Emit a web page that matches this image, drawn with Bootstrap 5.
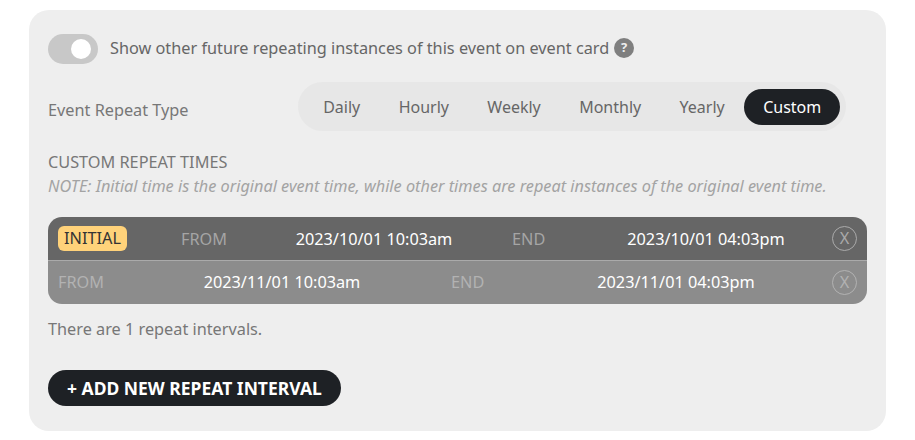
<!DOCTYPE html>
<html lang="en">
<head>
<meta charset="utf-8">
<title>Event Repeat</title>
<link rel="stylesheet" href="https://cdn.jsdelivr.net/npm/bootstrap@5.3.0/dist/css/bootstrap.min.css">
<style>
body{background:#fff;font-family:"Noto Sans",sans-serif;font-size:16.28px;color:#666;margin:0;}
.shell{margin:10px 29px 9px 29px;width:857px;height:421px;background:#eee;border-radius:20px;padding:24px 19px 0;}
.toggle-track{width:50px;height:30px;border-radius:15px;background:#c8c8c8;position:relative;flex:none;}
.toggle-knob{position:absolute;width:20px;height:20px;border-radius:50%;background:#fff;left:23px;top:5px;}
.toggle-label{color:#666;margin-left:12px;line-height:28px;padding-bottom:2px;}
.help-dot{width:20px;height:20px;border-radius:50%;background:#7f7f7f;color:#eee;font-size:13px;font-weight:700;display:flex;align-items:center;justify-content:center;margin-left:5px;margin-bottom:2px;}
.type-row{margin-top:18px;height:49px;}
.type-label{color:#777;padding-top:16px;line-height:24px;}
.pill-group{width:548px;height:49px;background:#e7e7e7;border-radius:25px;padding:7px 6px;margin-left:auto;margin-right:21px;}
.pill-item{height:36px;line-height:36px;border-radius:18px;color:#666;text-align:center;padding:0 19.2px;font-size:16px;}
.pill-on{background:#1e2125;color:#fff;}
.sec-title{color:#777;margin-top:19px;line-height:24px;}
.sec-note{color:#a3a3a3;font-style:italic;line-height:24px;margin-top:0;}
.time-table{margin-top:19px;border-radius:14px;overflow:hidden;width:819px;}
.time-row{display:grid;height:43px;padding:0 10px;align-items:center;}
.r-a{background:#666;grid-template-columns:123px 55px 276px 68px 252px 25px;}
.r-a .t-label,.r-a .t-value{padding-top:1px;}
.r-b{background:#8c8c8c;grid-template-columns:55px 338px 69px 312px 25px;border-top:1px solid #aaa;height:44px;}
.t-label{color:#a5a5a5;}
.r-b .t-label{color:#b2b2b2;}
.t-value{color:#fff;text-align:center;}
.tag-init{background:#ffd27a;color:#333;border-radius:6px;width:69px;height:25px;line-height:25px;text-align:center;}
.x-ring{width:25px;height:25px;border:1px solid #aaa;border-radius:50%;color:#aaa;font-size:16.28px;display:flex;align-items:center;justify-content:center;}
.r-b .x-ring{border-color:#b2b2b2;color:#b2b2b2;}
.count-note{color:#777;margin-top:13px;line-height:24px;}
.add-btn{margin-top:29px;background:#1e2125;color:#fff;font-weight:700;border-radius:18px;height:36px;line-height:36px;padding:0 19px;display:inline-block;border:0;font-size:17.5px;}
</style>
</head>
<body>
<div class="shell">
  <div class="d-flex align-items-center">
    <div class="toggle-track"><div class="toggle-knob"></div></div>
    <span class="toggle-label">Show other future repeating instances of this event on event card</span>
    <span class="help-dot">?</span>
  </div>
  <div class="d-flex type-row">
    <div class="type-label">Event Repeat Type</div>
    <div class="pill-group d-flex">
      <span class="pill-item">Daily</span>
      <span class="pill-item">Hourly</span>
      <span class="pill-item">Weekly</span>
      <span class="pill-item">Monthly</span>
      <span class="pill-item">Yearly</span>
      <span class="pill-item pill-on">Custom</span>
    </div>
  </div>
  <div class="sec-title">CUSTOM REPEAT TIMES</div>
  <div class="sec-note">NOTE: Initial time is the original event time, while other times are repeat instances of the original event time.</div>
  <div class="time-table">
    <div class="time-row r-a">
      <div><div class="tag-init">INITIAL</div></div>
      <div class="t-label">FROM</div>
      <div class="t-value">2023/10/01 10:03am</div>
      <div class="t-label">END</div>
      <div class="t-value">2023/10/01 04:03pm</div>
      <div class="x-ring">X</div>
    </div>
    <div class="time-row r-b">
      <div class="t-label">FROM</div>
      <div class="t-value">2023/11/01 10:03am</div>
      <div class="t-label">END</div>
      <div class="t-value">2023/11/01 04:03pm</div>
      <div class="x-ring">X</div>
    </div>
  </div>
  <div class="count-note">There are 1 repeat intervals.</div>
  <button class="add-btn btn">+ ADD NEW REPEAT INTERVAL</button>
</div>
</body>
</html>
